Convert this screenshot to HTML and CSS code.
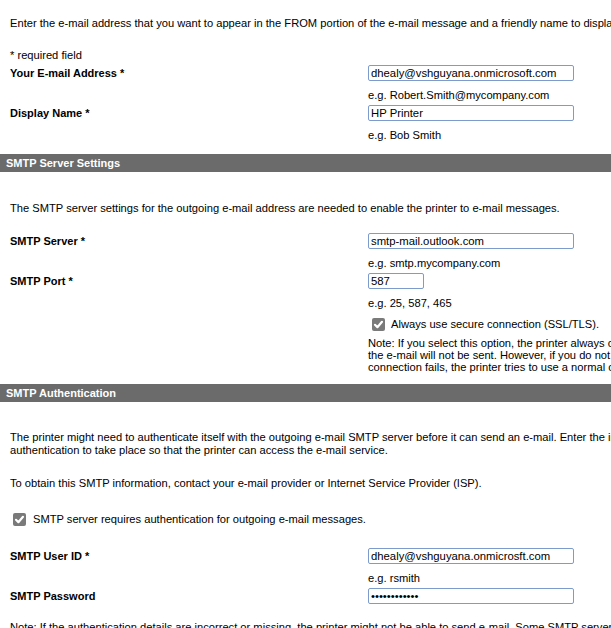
FILE: index.html
```html
<!DOCTYPE html>
<html lang="en">
<head>
<meta charset="utf-8">
<title>E-mail Setup</title>
<link rel="stylesheet" href="styles.css">
</head>
<body>
<div class="page">
  <p class="intro">Enter the e-mail address that you want to appear in the FROM portion of the e-mail message and a friendly name to display.</p>
  <p class="required">* required field</p>

  <div class="row row-first">
    <label class="label">Your E-mail Address *</label>
    <input class="field" type="text" value="dhealy@vshguyana.onmicrosoft.com">
  </div>
  <p class="hint">e.g. Robert.Smith@mycompany.com</p>
  <div class="row">
    <label class="label">Display Name *</label>
    <input class="field" type="text" value="HP Printer">
  </div>
  <p class="hint">e.g. Bob Smith</p>

  <div class="bar bar-server">SMTP Server Settings</div>
  <p class="para para-server">The SMTP server settings for the outgoing e-mail address are needed to enable the printer to e-mail messages.</p>

  <div class="row row-server">
    <label class="label">SMTP Server *</label>
    <input class="field" type="text" value="smtp-mail.outlook.com">
  </div>
  <p class="hint">e.g. smtp.mycompany.com</p>
  <div class="row">
    <label class="label">SMTP Port *</label>
    <input class="field field-port" type="text" value="587">
  </div>
  <p class="hint">e.g. 25, 587, 465</p>
  <div class="check-row check-ssl">
    <span class="cb"><svg viewBox="0 0 13 13" width="13" height="13"><path d="M3 6.8 L5.4 9.2 L10 3.8" fill="none" stroke="#fff" stroke-width="2.2" stroke-linecap="round" stroke-linejoin="round"/></svg></span>
    <span>Always use secure connection (SSL/TLS).</span>
  </div>
  <p class="note">Note: If you select this option, the printer always connects using SSL/TLS. If the secure connection fails,<br>the e-mail will not be sent. However, if you do not select this option and the secure<br>connection fails, the printer tries to use a normal connection.</p>

  <div class="bar bar-auth">SMTP Authentication</div>
  <p class="para para-auth">The printer might need to authenticate itself with the outgoing e-mail SMTP server before it can send an e-mail. Enter the information required for<br>authentication to take place so that the printer can access the e-mail service.</p>
  <p class="para para-isp">To obtain this SMTP information, contact your e-mail provider or Internet Service Provider (ISP).</p>

  <div class="check-row check-auth">
    <span class="cb"><svg viewBox="0 0 13 13" width="13" height="13"><path d="M3 6.8 L5.4 9.2 L10 3.8" fill="none" stroke="#fff" stroke-width="2.2" stroke-linecap="round" stroke-linejoin="round"/></svg></span>
    <span>SMTP server requires authentication for outgoing e-mail messages.</span>
  </div>

  <div class="row row-user">
    <label class="label">SMTP User ID *</label>
    <input class="field" type="text" value="dhealy@vshguyana.onmicrosft.com">
  </div>
  <p class="hint">e.g. rsmith</p>
  <div class="row">
    <label class="label">SMTP Password</label>
    <input class="field" type="password" value="abcdefghijkl">
  </div>
  <p class="para para-final">Note: If the authentication details are incorrect or missing, the printer might not be able to send e-mail. Some SMTP servers require authentication.</p>
</div>
</body>
</html>
```

FILE: styles.css
```css
html {
  overflow: hidden;
}

body {
  margin: 0;
  background: #fff;
  color: #000;
  font-family: "Liberation Sans", Arial, sans-serif;
  font-size: 11.15px;
  line-height: 14px;
}

.page {
  width: 1100px;
}

p {
  margin: 0;
  white-space: nowrap;
}

.intro {
  padding: 16px 0 0 10px;
}

.required {
  margin-top: 18px;
  padding-left: 10px;
}

.row {
  display: grid;
  grid-template-columns: 358px 206px;
  align-items: center;
  height: 16px;
  margin-top: 3px;
  padding-left: 10px;
}

.label {
  font-weight: bold;
  font-size: 11px;
  color: #000;
}

.field {
  box-sizing: border-box;
  width: 206px;
  height: 16px;
  margin: 0;
  padding: 0 2px;
  border: 1px solid #7d9ccb;
  border-radius: 2px;
  font-family: "Liberation Sans", Arial, sans-serif;
  font-size: 11.3px;
  color: #000;
  background: #fff;
  outline: none;
}

.field-port {
  width: 56px;
}

.hint {
  margin-top: 7px;
  padding-left: 368px;
}

.bar {
  height: 18px;
  line-height: 18px;
  padding-left: 6px;
  background: #6b6b6b;
  color: #fff;
  font-weight: bold;
  font-size: 11px;
}

.bar-server {
  margin-top: 12px;
}

.para {
  padding-left: 10px;
}

.para-server {
  margin-top: 29px;
}

.row-server {
  margin-top: 18px;
}

.check-row {
  display: flex;
  align-items: center;
  gap: 6px;
  height: 16px;
}

.check-ssl {
  margin-top: 6px;
  padding-left: 372px;
}

.cb {
  display: block;
  flex: none;
  width: 13px;
  height: 13px;
  border-radius: 2px;
  background: #7a7a7a;
}

.cb svg {
  display: block;
}

.note {
  margin-top: 5px;
  padding-left: 368px;
  line-height: 12px;
}

.bar-auth {
  margin-top: 11px;
}

.para-auth {
  margin-top: 29px;
  line-height: 13px;
}

.para-isp {
  margin-top: 19px;
}

.check-auth {
  margin-top: 21px;
  padding-left: 13px;
  gap: 7px;
}

.row-user {
  margin-top: 21px;
}

.para-final {
  margin-top: 16px;
}
```
